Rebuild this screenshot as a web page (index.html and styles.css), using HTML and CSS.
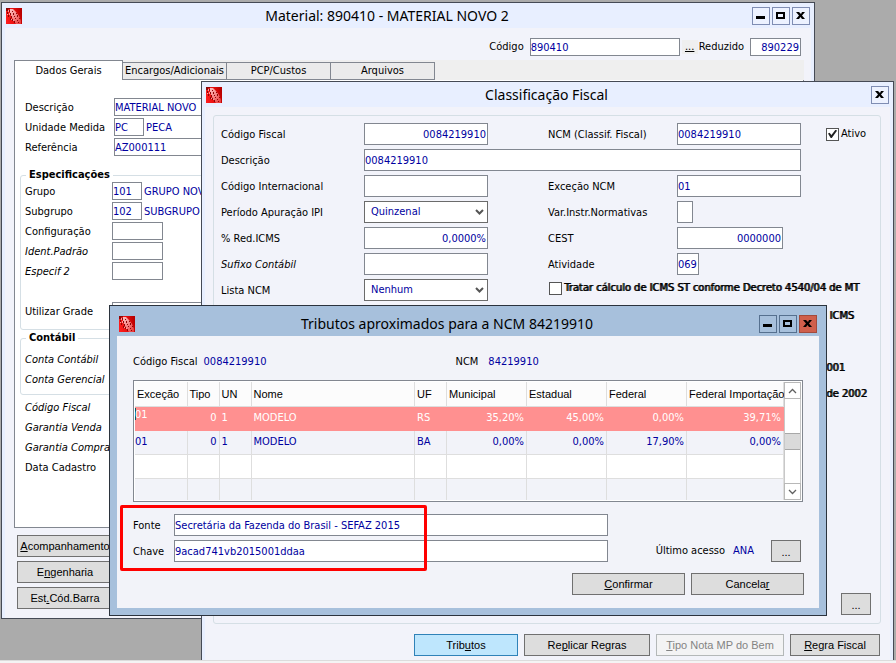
FILE: index.html
```html
<!DOCTYPE html>
<html lang="pt-BR">
<head>
  <meta charset="UTF-8" />
  <meta name="viewport" content="width=device-width, initial-scale=1.0"/>
  <title>Material: 890410 - MATERIAL NOVO 2</title>
  <link rel="stylesheet" href="styles.css">
</head>
<body>

  <!-- Shared icons -->
  <svg class="sprite" aria-hidden="true">
    <defs>
      <linearGradient id="logoRed" x1="0" y1="0.6" x2="1" y2="0.4">
        <stop offset="0" stop-color="#ff1c1c"/>
        <stop offset="0.6" stop-color="#e00c0c"/>
        <stop offset="1" stop-color="#b80000"/>
      </linearGradient>
      <linearGradient id="logoWing" x1="0" y1="0" x2="1" y2="1">
        <stop offset="0" stop-color="#ffc4c4"/>
        <stop offset="0.5" stop-color="#f48080"/>
        <stop offset="1" stop-color="#e83030"/>
      </linearGradient>
    </defs>
    <symbol id="logo" viewBox="0 0 16 16">
      <rect width="16" height="16" fill="url(#logoRed)"/>
      <path d="M4 1h3l3 3 3 4 2 5v3h-5L6 10 4 6z" fill="url(#logoWing)"/>
      <g fill="#8c0606" shape-rendering="crispEdges">
        <path d="M0 0h4v1H0zM0 1h2v2H0zM3 2h1v2H3zM1 4h1v2H1zM4 5h1v2H4zM2 7h1v2H2zM5 8h1v2H5zM4 10h1v2H4zM6 11h1v2H6zM8 13h1v2H8z"/>
        <path d="M6 3h1v1H6zM7 5h1v2H7zM8 8h1v1H8zM9 10h1v1H9zM11 12h1v1h-1zM10 5h1v1h-1zM11 7h1v2h-1zM13 10h1v1h-1zM12 14h1v1h-1z"/>
      </g>
      <path d="M2 2h1v2H2zM3 5h1v2H3zM1 6h1v1H1zM5 11h1v1H5zM7 12h1v1H7z" fill="#ff9c9c" shape-rendering="crispEdges"/>
    </symbol>
    <symbol id="min" viewBox="0 0 16 16"><path d="M3 8h9v3H3z"/></symbol>
    <symbol id="max" viewBox="0 0 16 16"><path fill-rule="evenodd" d="M3 4h9v7H3zM5 6v3h5V6z"/></symbol>
    <symbol id="close" viewBox="0 0 16 16"><path d="M3 4h3l2 2 1-2h3L9 7.500l3 3.500H9L7.500 9 6 11H3l3-3.500z"/></symbol>
    <symbol id="down" viewBox="0 0 9 6"><path d="M1 1l3.500 3.500L8 1" fill="none" stroke="#555" stroke-width="2"/></symbol>
    <symbol id="thin-up" viewBox="0 0 9 6"><path d="M1 5l3.500-3.500L8 5" fill="none" stroke="#606060" stroke-width="1.300"/></symbol>
    <symbol id="thin-down" viewBox="0 0 9 6"><path d="M1 1l3.500 3.500L8 1" fill="none" stroke="#606060" stroke-width="1.300"/></symbol>
  </svg>

  <main class="desktop">

    <!-- Material window -->
    <section class="window window-material">
      <header class="titlebar">
        <svg class="logo"><use href="#logo"/></svg>
        <h1>Material: 890410 - MATERIAL NOVO 2</h1>
        <button class="win-btn" aria-label="Minimizar"><svg><use href="#min"/></svg></button>
        <button class="win-btn" aria-label="Maximizar"><svg><use href="#max"/></svg></button>
        <button class="win-btn" aria-label="Fechar"><svg><use href="#close"/></svg></button>
      </header>
      <div class="code-row">
        <label for="codigo">Código</label>
        <input id="codigo" class="code-input" value="890410">
        <button class="dots-link" aria-label="Pesquisar">...</button>
        <label for="reduzido">Reduzido</label>
        <input id="reduzido" class="short-input right" value="890229">
      </div>
      <nav class="tabs">
        <button class="tab active">Dados Gerais</button>
        <button class="tab">Encargos/Adicionais</button>
        <button class="tab">PCP/Custos</button>
        <button class="tab">Arquivos</button>
      </nav>
      <div class="tab-panel">
        <div class="rows main-rows">
          <div class="row"><label for="desc">Descrição</label><input id="desc" class="wide" value="MATERIAL NOVO"></div>
          <div class="row"><label for="un">Unidade Medida</label><input id="un" class="tiny" value="PC"><span class="value">PECA</span></div>
          <div class="row"><label for="ref">Referência</label><input id="ref" class="wide" value="AZ000111"></div>
        </div>
        <fieldset class="group group-spec">
          <legend>Especificações</legend>
          <div class="rows">
            <div class="row"><label for="grupo">Grupo</label><input id="grupo" class="tiny" value="101"><span class="value">GRUPO NOVO</span></div>
            <div class="row"><label for="sub">Subgrupo</label><input id="sub" class="tiny" value="102"><span class="value">SUBGRUPO</span></div>
            <div class="row"><label for="config">Configuração</label><input id="config" class="small"></div>
            <div class="row"><label for="ident" class="italic">Ident.Padrão</label><input id="ident" class="small"></div>
            <div class="row"><label for="espec" class="italic">Especif 2</label><input id="espec" class="small"></div>
            <div class="row row-gap"><label for="grade">Utilizar Grade</label><input id="grade" class="wide"></div>
          </div>
        </fieldset>
        <fieldset class="group">
          <legend>Contábil</legend>
          <div class="rows">
            <div class="row"><span class="italic">Conta Contábil</span></div>
            <div class="row"><span class="italic">Conta Gerencial</span></div>
          </div>
        </fieldset>
        <div class="rows last-rows">
          <div class="row"><span class="italic">Código Fiscal</span></div>
          <div class="row"><span class="italic">Garantia Venda</span></div>
          <div class="row"><span class="italic">Garantia Compra</span></div>
          <div class="row"><span>Data Cadastro</span></div>
        </div>
      </div>
      <div class="side-buttons">
        <button class="btn"><u>A</u>companhamento</button>
        <button class="btn">E<u>n</u>genharia</button>
        <button class="btn">Est<u>.</u>Cód.Barra</button>
      </div>
    </section>

    <!-- Fiscal classification window -->
    <section class="window window-fiscal">
      <header class="titlebar">
        <svg class="logo"><use href="#logo"/></svg>
        <h2>Classificação Fiscal</h2>
        <button class="win-btn" aria-label="Fechar"><svg><use href="#close"/></svg></button>
      </header>
      <div class="fiscal-panel">
        <div class="fiscal-grid">
          <label for="cf">Código Fiscal</label>
          <input id="cf" class="right" value="0084219910">
          <label for="ncm" class="second">NCM (Classif. Fiscal)</label>
          <input id="ncm" value="0084219910">
          <label class="check check-active"><input type="checkbox" checked>Ativo</label>

          <label for="fdesc" class="first">Descrição</label>
          <input id="fdesc" class="span-three" value="0084219910">

          <label for="ci" class="first">Código Internacional</label>
          <input id="ci">
          <label for="exc" class="second">Exceção NCM</label>
          <input id="exc" value="01">

          <label for="ipi" class="first">Período Apuração IPI</label>
          <span class="select"><select id="ipi"><option>Quinzenal</option></select><svg><use href="#down"/></svg></span>
          <label for="var" class="second">Var.Instr.Normativas</label>
          <input id="var" class="w-one">

          <label for="red" class="first">% Red.ICMS</label>
          <input id="red" class="right" value="0,0000%">
          <label for="cest" class="second">CEST</label>
          <input id="cest" class="w-seven right" value="0000000">

          <label for="suf" class="first italic">Sufixo Contábil</label>
          <input id="suf">
          <label for="ativ" class="second">Atividade</label>
          <input id="ativ" class="w-three" value="069">

          <label for="lista" class="first">Lista NCM</label>
          <span class="select"><select id="lista"><option>Nenhum</option></select><svg><use href="#down"/></svg></span>
          <label class="check check-wide strong"><input type="checkbox">Tratar cálculo de ICMS ST conforme Decreto 4540/04 de MT</label>

          <span class="note strong">&nbsp;ICMS</span>
          <span class="note note-gap strong">001</span>
          <span class="note note-last strong">de 2002</span>
        </div>
        <button class="btn btn-dots" aria-label="Mais opções">...</button>
      </div>
      <div class="fiscal-buttons">
        <button class="btn btn-primary">Trib<u>u</u>tos</button>
        <button class="btn">Re<u>p</u>licar Regras</button>
        <button class="btn" disabled><u>T</u>ipo Nota MP do Bem</button>
        <button class="btn"><u>R</u>egra Fiscal</button>
      </div>
    </section>

    <!-- Taxes dialog -->
    <section class="window dialog">
      <header class="titlebar">
        <svg class="logo"><use href="#logo"/></svg>
        <h2>Tributos aproximados para a NCM 84219910</h2>
        <button class="win-btn" aria-label="Minimizar"><svg><use href="#min"/></svg></button>
        <button class="win-btn" aria-label="Maximizar"><svg><use href="#max"/></svg></button>
        <button class="win-btn win-close" aria-label="Fechar"><svg><use href="#close"/></svg></button>
      </header>
      <div class="dialog-body">
        <div class="summary">
          <span>Código Fiscal</span><span class="value">0084219910</span>
          <span class="summary-ncm">NCM</span><span class="value">84219910</span>
        </div>
        <div class="grid-box">
          <table>
            <colgroup>
              <col class="c-exc"><col class="c-min"><col class="c-min"><col><col class="c-min">
              <col class="c-pct"><col class="c-pct"><col class="c-pct"><col class="c-imp">
            </colgroup>
            <thead>
              <tr><th>Exceção</th><th>Tipo</th><th>UN</th><th>Nome</th><th>UF</th><th>Municipal</th><th>Estadual</th><th>Federal</th><th>Federal Importação</th></tr>
            </thead>
            <tbody>
              <tr class="selected"><td><span class="caret">01</span></td><td>0</td><td>1</td><td>MODELO</td><td>RS</td><td>35,20%</td><td>45,00%</td><td>0,00%</td><td>39,71%</td></tr>
              <tr><td>01</td><td>0</td><td>1</td><td>MODELO</td><td>BA</td><td>0,00%</td><td>0,00%</td><td>17,90%</td><td>0,00%</td></tr>
              <tr><td></td><td></td><td></td><td></td><td></td><td></td><td></td><td></td><td></td></tr>
              <tr><td></td><td></td><td></td><td></td><td></td><td></td><td></td><td></td><td></td></tr>
            </tbody>
          </table>
          <div class="scrollbar">
            <button aria-label="Rolar para cima"><svg><use href="#thin-up"/></svg></button>
            <div class="track"><div class="thumb"></div></div>
            <button aria-label="Rolar para baixo"><svg><use href="#thin-down"/></svg></button>
          </div>
        </div>
        <div class="source">
          <div class="source-fields">
            <label for="fonte">Fonte</label>
            <input id="fonte" value="Secretária da Fazenda do Brasil - SEFAZ 2015">
            <label for="chave">Chave</label>
            <input id="chave" value="9acad741vb2015001ddaa">
          </div>
          <div class="access">
            <span>Último acesso</span><span class="value">ANA</span>
            <button class="btn btn-dots" aria-label="Histórico de acesso">...</button>
          </div>
          <div class="highlight"></div>
        </div>
        <div class="dialog-buttons">
          <button class="btn"><u>C</u>onfirmar</button>
          <button class="btn">Cancela<u>r</u></button>
        </div>
      </div>
    </section>

  </main>
  <footer class="statusbar"></footer>

</body>
</html>
```
FILE: styles.css
```css
* {
  box-sizing: border-box;
  margin: 0;
  padding: 0;
}

body {
  display: flex;
  flex-direction: column;
  height: 100vh;
  background: #ababab;
  color: #000;
  font: 11px/14px 'DejaVu Sans Condensed', 'Noto Sans', sans-serif;
  overflow: hidden;
}

input,
select,
button {
  font: inherit;
  border-radius: 0;
}

.sprite {
  position: absolute;
  width: 0;
  height: 0;
}

.desktop {
  position: relative;
  flex: 1;
  overflow: hidden;
}

.statusbar {
  height: 3px;
  background: #f4f4f4;
  border-top: 1px solid #dcdcdc;
}

/* Windows */
.window {
  position: absolute;
  display: flex;
  flex-direction: column;
  background: #f2f3fa;
  border: 1px solid #454a55;
}

.window-material {
  left: 1px;
  right: 81px;
  top: 2px;
  height: 617px;
}

.window-fiscal {
  left: 201px;
  right: 2px;
  top: 81px;
  height: 600px;
}

.window-material,
.window-fiscal {
  box-shadow: inset 3px 0 #e8efff, inset -3px 0 #e8efff;
}

.dialog {
  left: 109px;
  right: 69px;
  top: 305px;
  border-color: #2b333d;
  background: #a7c0dc;
  padding: 0 7px 7px;
}

.titlebar {
  display: flex;
  align-items: center;
  gap: 2px;
  height: 25px;
  padding: 0 4px;
  background: #e8efff;
}

.dialog .titlebar {
  height: 30px;
  padding: 5px 2px 0;
  background: none;
}

.titlebar h1,
.titlebar h2 {
  flex: 1;
  text-align: center;
  font: 14px/20px 'Noto Sans', 'Open Sans', sans-serif;
}

.logo {
  width: 16px;
  height: 16px;
}

.win-btn {
  width: 18px;
  height: 18px;
  border: 1px solid #7f8db3;
  background: #edf2ff;
}

.win-btn svg {
  display: block;
  width: 16px;
  height: 16px;
}

.dialog .win-btn {
  border-color: #56708f;
  background: #a7c0dc;
}

.dialog .win-close {
  border-color: #a34a3c;
  background: #cf5f4c;
}

/* Fields */
input,
select {
  height: 22px;
  border: 1px solid #828790;
  background: #fff;
  color: #0000a0;
  min-width: 0;
}

.right {
  text-align: right;
  padding-right: 1px;
}

.value {
  color: #0000a0;
}

.italic {
  font-style: italic;
}

/* Doubled strokes, the way the old GDI bold draws */
.strong {
  text-shadow: 1px 0 #000;
}

.select {
  display: grid;
  align-items: center;
}

.select select,
.select svg {
  grid-area: 1 / 1;
}

.select select {
  appearance: none;
  width: 100%;
  padding: 0 6px;
  border-color: #6b6b6b;
}

.select svg {
  justify-self: end;
  width: 9px;
  height: 6px;
  margin-right: 4px;
  pointer-events: none;
}

.check {
  display: flex;
  align-items: center;
  gap: 2px;
  white-space: nowrap;
}

.check input {
  appearance: none;
  display: grid;
  place-items: center;
  flex: none;
  width: 13px;
  height: 13px;
  border-color: #555;
}

.check input:checked::before {
  content: "";
  width: 9px;
  height: 9px;
  background: #222;
  clip-path: polygon(0 45%, 18% 35%, 38% 60%, 85% 0, 100% 15%, 42% 95%, 30% 95%);
}

/* Buttons */
.btn {
  height: 22px;
  border: 1px solid #707070;
  background: #ddd;
  color: #000;
  font: 11px/18px 'Liberation Sans', Arial, sans-serif;
  white-space: nowrap;
}

.btn:disabled {
  border-color: #b4b8b8;
  background: #f3f3f4;
  color: #838383;
}

.btn-primary {
  border-color: #2f82b8;
  background: #bee6fd;
}

.btn-dots {
  width: 30px;
  padding-top: 2px;
}

/* Material window */
.code-row {
  display: flex;
  justify-content: flex-end;
  align-items: center;
  height: 32px;
  padding: 6px 13px 0 0;
}

.code-row input {
  height: 18px;
}

.code-input {
  width: 150px;
  margin-left: 6px;
}

.short-input {
  width: 51px;
  margin-left: 6px;
}

.dots-link {
  width: 16px;
  margin: 0 1px 0 2px;
  border: 0;
  background: #efefef;
  text-decoration: underline;
}

.tabs {
  display: flex;
  align-items: flex-end;
  height: 20px;
  margin: 0 10px 0 12px;
  background: #efefef;
}

.tab {
  flex: 0 0 104px;
  height: 18px;
  border: 1px solid #828790;
  border-left-width: 0;
  background: #ebebeb;
  white-space: nowrap;
}

.tab.active {
  flex-basis: 109px;
  height: 20px;
  border-width: 1px 1px 0;
  background: #fff;
}

.tab-panel {
  height: 448px;
  margin: 0 10px 0 12px;
  padding: 17px 0 0 5px;
  background: #fff;
  border: 1px solid #828790;
  border-top: 0;
}

.rows {
  display: flex;
  flex-direction: column;
}

.row {
  display: flex;
  align-items: center;
  height: 20px;
}

.row label {
  width: 87px;
}

.row label,
.row span,
.summary span,
.source label,
.fiscal-grid label:not(.check) {
  padding-top: 2px;
}

.row input {
  height: 18px;
  margin-right: 2px;
}

.main-rows,
.last-rows {
  padding-left: 5px;
}

.main-rows label {
  width: 89px;
}

.row-gap {
  margin-top: 20px;
}

.tiny {
  width: 30px;
}

.small {
  width: 51px;
}

.wide {
  width: 250px;
}

.group {
  border: 1px solid #d5dfe5;
  border-radius: 3px;
  padding: 5px 4px;
  margin: 0 4px 2px 0;
}

.group-spec {
  padding: 0 4px 8px;
  margin-top: 12px;
}

.group legend {
  padding: 0 3px;
  margin-left: 1px;
  font-weight: bold;
  line-height: 12px;
}

.side-buttons {
  display: grid;
  gap: 4px;
  width: 96px;
  margin: 7px 15px;
}

/* Fiscal window */
.fiscal-panel {
  display: flex;
  flex-direction: column;
  justify-content: space-between;
  align-items: flex-start;
  height: 509px;
  margin: 8px 12px 0 11px;
  padding: 7px 7px 8px;
  border: 1px solid #d5dfe5;
  border-radius: 3px;
}

.fiscal-panel .btn-dots {
  align-self: flex-end;
  margin-right: 2px;
}

.fiscal-grid {
  display: grid;
  grid-template-columns: 143px 124px 189px 124px auto;
  grid-auto-rows: 22px;
  row-gap: 4px;
  align-items: center;
}

.fiscal-grid .first {
  grid-column: 1;
}

.fiscal-grid .second {
  padding-left: 60px;
}

.span-three {
  grid-column: span 3;
}

.check-active {
  margin-left: 25px;
}

.check-wide {
  grid-column: 3 / span 3;
  margin: -4px 0 0 61px;
}

.w-one {
  width: 16px;
}

.w-three {
  width: 22px;
}

.w-seven {
  width: 106px;
}

.note {
  grid-column: 5;
  margin-left: 25px;
}

.note-gap {
  grid-row: 10;
}

.note-last {
  grid-row: 11;
}

.fiscal-buttons {
  display: grid;
  grid-template-columns: 104px 126px 128px 90px;
  justify-content: end;
  gap: 6px;
  margin: 10px 13px;
}

/* Taxes dialog */
.dialog-body {
  background: #f2f3f9;
  padding: 17px 15px 13px 16px;
}

.summary {
  display: flex;
  gap: 6px;
}

.summary-ncm {
  margin: 0 4px 0 183px;
}

.grid-box {
  display: flex;
  margin: 11px 1px 0 0;
  padding: 1px;
  border: 1px solid #828790;
  background: #fff;
}

table {
  flex: 1;
  table-layout: fixed;
  width: 0;
  border-collapse: collapse;
}

.c-exc {
  width: 52px;
}

.c-min {
  width: 32px;
}

.c-pct {
  width: 80px;
}

.c-imp {
  width: 97px;
}

th,
td {
  height: 24px;
  border-right: 1px solid #dedede;
  border-bottom: 1px solid #dedede;
  padding: 0 2px;
  white-space: nowrap;
}

tr:last-child td {
  height: 22px;
  border-bottom: 0;
}

th {
  background: #fcfcfc;
  font: 11px/14px 'Liberation Sans', Arial, sans-serif;
  text-align: left;
}

td {
  color: #0000a0;
}

td:first-child {
  padding-left: 0;
}

td:nth-child(2),
td:nth-child(n+6) {
  text-align: right;
}

tbody tr:nth-child(even) {
  background: #f2f3f9;
}

.selected td {
  background: #ff9090;
  border-color: #ff9090;
  color: #fff;
}

.caret {
  display: block;
  height: 20px;
  background: linear-gradient(#006060, #006060) no-repeat 0 0 / 1px 12px;
}

.scrollbar {
  display: flex;
  flex-direction: column;
  width: 17px;
}

.scrollbar button {
  display: grid;
  place-items: center;
  height: 17px;
  border: 1px solid #b8b8b8;
  background: #fff;
}

.scrollbar svg {
  width: 9px;
  height: 6px;
}

.track {
  display: flex;
  flex-direction: column;
  justify-content: center;
  flex: 1;
  border: 1px solid #c8c8c8;
  border-width: 0 1px;
}

.thumb {
  height: 17px;
  background: #dadada;
  border: 1px solid #a8a8a8;
  border-width: 1px 0;
}

.source {
  position: relative;
  display: flex;
  justify-content: space-between;
  align-items: flex-end;
  margin-top: 12px;
}

.source-fields {
  display: grid;
  grid-template-columns: 41px 434px;
  gap: 4px 0;
  align-items: center;
}

.access {
  display: flex;
  align-items: center;
  gap: 8px;
  padding-right: 3px;
}

.access .btn {
  margin-left: 9px;
}

/* Red frame over the source fields */
.highlight {
  position: absolute;
  left: -13px;
  top: -9px;
  width: 307px;
  height: 66px;
  border: 3px solid #f00;
  border-radius: 2px;
}

.dialog-buttons {
  display: grid;
  grid-template-columns: 113px 113px;
  justify-content: end;
  gap: 6px;
  margin-top: 11px;
}
```
